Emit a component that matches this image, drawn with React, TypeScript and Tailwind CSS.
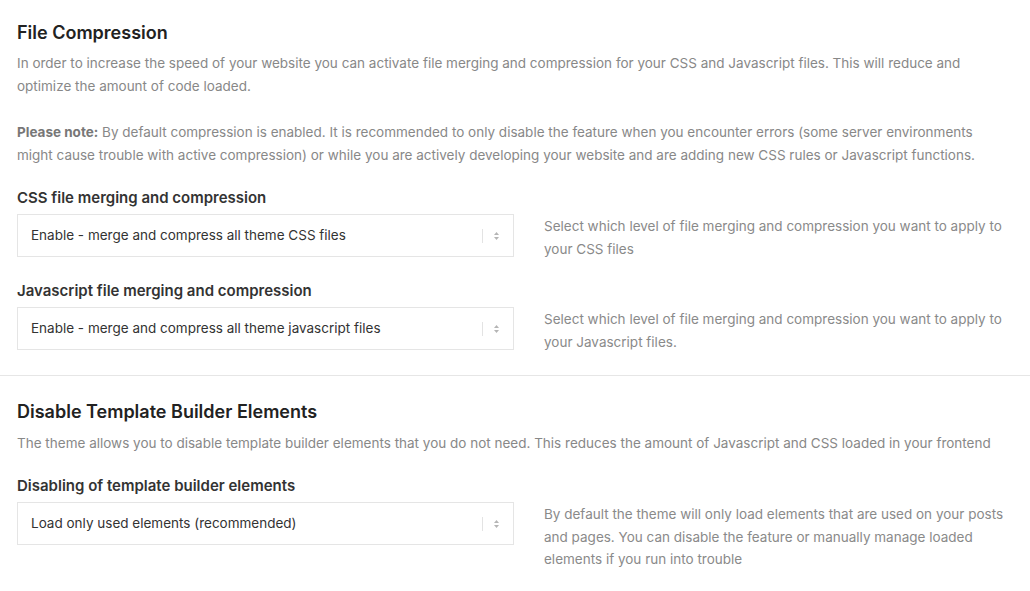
type SelectRowProps = {
  label: string;
  value: string;
  help: string;
  first?: boolean;
};

function SelectArrows() {
  return (
    <svg width="7" height="10" viewBox="0 0 7 10" className="text-[#b5b5b5]">
      <path d="M3.5 1 L6 4 L1 4 Z" fill="currentColor" />
      <path d="M3.5 9 L6 6 L1 6 Z" fill="currentColor" />
    </svg>
  );
}

function SelectRow({ label, value, help, first }: SelectRowProps) {
  return (
    <div className={first ? 'mt-[21px]' : 'mt-[21px]'}>
      <h4 className="text-[15px] font-semibold text-[#333] leading-[20px]">{label}</h4>
      <div className="flex items-start gap-[30px] mt-[6px]">
        <div className="w-[497px] h-[43px] shrink-0 border border-[#e5e5e5] bg-white flex items-center pl-[13px] pr-[13px]">
          <span className="flex-1 text-[13.5px] text-[#333]">{value}</span>
          <span className="w-px h-[14px] bg-[#e3e3e3] mr-[10px]" />
          <SelectArrows />
        </div>
        <p className="text-[13.5px] leading-[22.5px] text-[#8a8a8a] pt-[1px]">{help}</p>
      </div>
    </div>
  );
}

export default function App() {
  return (
    <div className="w-[1030px] h-[591px] bg-white overflow-hidden" style={{ fontFamily: 'Inter, "Liberation Sans", Arial, sans-serif' }}>
      <section className="px-[17px] pt-[22px] pb-[22px]">
        <h2 className="text-[18px] font-semibold text-[#222] leading-[22px]">File Compression</h2>
        <p className="mt-[8px] text-[13.5px] leading-[23px] text-[#888]">
          In order to increase the speed of your website you can activate file merging and compression for your CSS and Javascript files. This will reduce and optimize the amount of code loaded.
        </p>
        <p className="mt-[23px] text-[13.5px] leading-[23px] text-[#888] pr-[30px]">
          <strong className="font-bold text-[#777]">Please note:</strong> By default compression is enabled. It is recommended to only disable the feature when you encounter errors (some server environments might cause trouble with active compression) or while you are actively developing your website and are adding new CSS rules or Javascript functions.
        </p>
        <SelectRow
          first
          label="CSS file merging and compression"
          value="Enable - merge and compress all theme CSS files"
          help="Select which level of file merging and compression you want to apply to your CSS files"
        />
        <SelectRow
          label="Javascript file merging and compression"
          value="Enable - merge and compress all theme javascript files"
          help="Select which level of file merging and compression you want to apply to your Javascript files."
        />
      </section>
      <div className="h-px bg-[#e6e6e6]" />
      <section className="px-[17px] pt-[25px]">
        <h2 className="text-[18px] font-semibold text-[#222] leading-[22px]">Disable Template Builder Elements</h2>
        <p className="mt-[9px] text-[13.5px] leading-[23px] text-[#888]">
          The theme allows you to disable template builder elements that you do not need. This reduces the amount of Javascript and CSS loaded in your frontend
        </p>
        <SelectRow
          first
          label="Disabling of template builder elements"
          value="Load only used elements (recommended)"
          help="By default the theme will only load elements that are used on your posts and pages. You can disable the feature or manually manage loaded elements if you run into trouble"
        />
      </section>
    </div>
  );
}
